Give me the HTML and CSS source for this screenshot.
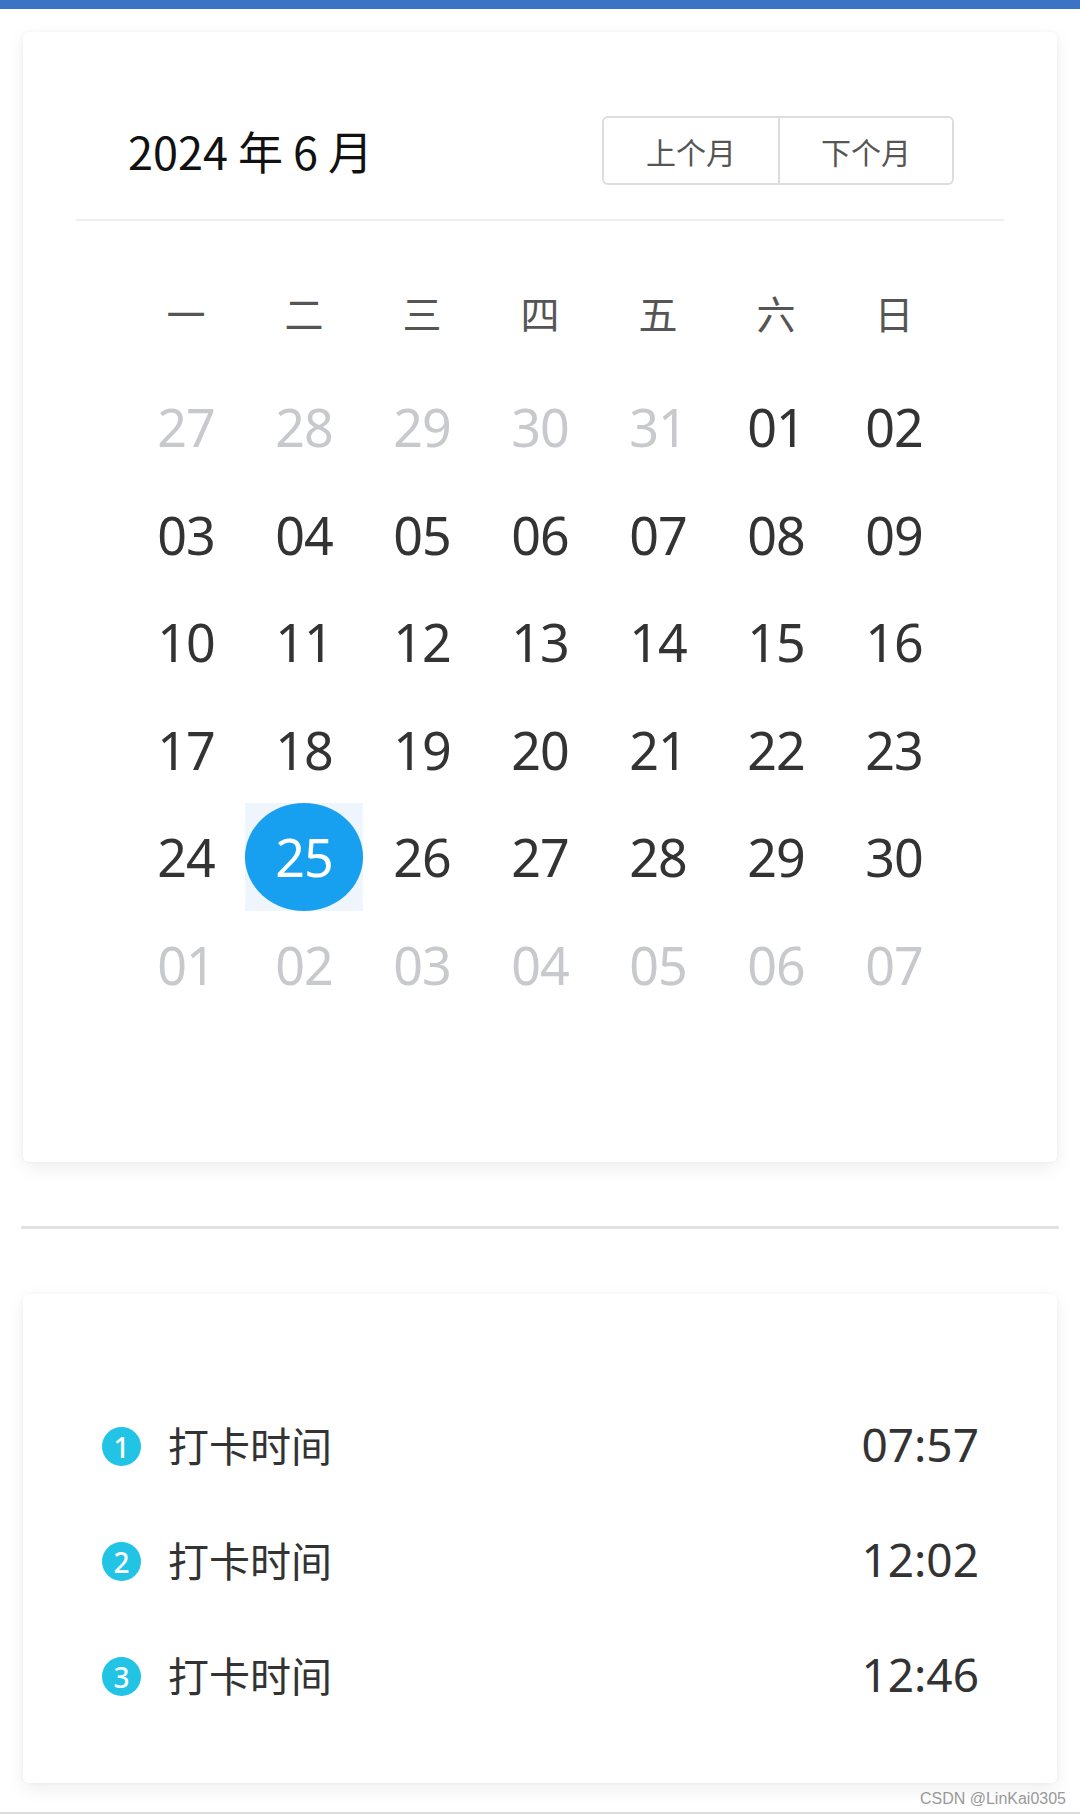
FILE: index.html
```html
<!DOCTYPE html>
<html>
<head>
  <meta charset="utf-8">
  <title>打卡日历</title>
  <link rel="stylesheet" href="styles.css">
</head>
<body>
  <div class="top-bar"></div>

  <div class="page">
    <div class="card calendar-card">
      <div class="calendar-header">
        <div class="month-title">2024 年 6 月</div>
        <div class="month-switch">
          <button class="switch-btn">上个月</button>
          <button class="switch-btn">下个月</button>
        </div>
      </div>

      <div class="calendar-grid">
        <div class="weekday">一</div>
        <div class="weekday">二</div>
        <div class="weekday">三</div>
        <div class="weekday">四</div>
        <div class="weekday">五</div>
        <div class="weekday">六</div>
        <div class="weekday">日</div>

        <div class="day other">27</div>
        <div class="day other">28</div>
        <div class="day other">29</div>
        <div class="day other">30</div>
        <div class="day other">31</div>
        <div class="day">01</div>
        <div class="day">02</div>

        <div class="day">03</div>
        <div class="day">04</div>
        <div class="day">05</div>
        <div class="day">06</div>
        <div class="day">07</div>
        <div class="day">08</div>
        <div class="day">09</div>

        <div class="day">10</div>
        <div class="day">11</div>
        <div class="day">12</div>
        <div class="day">13</div>
        <div class="day">14</div>
        <div class="day">15</div>
        <div class="day">16</div>

        <div class="day">17</div>
        <div class="day">18</div>
        <div class="day">19</div>
        <div class="day">20</div>
        <div class="day">21</div>
        <div class="day">22</div>
        <div class="day">23</div>

        <div class="day">24</div>
        <div class="day selected"><span class="day-dot">25</span></div>
        <div class="day">26</div>
        <div class="day">27</div>
        <div class="day">28</div>
        <div class="day">29</div>
        <div class="day">30</div>

        <div class="day other">01</div>
        <div class="day other">02</div>
        <div class="day other">03</div>
        <div class="day other">04</div>
        <div class="day other">05</div>
        <div class="day other">06</div>
        <div class="day other">07</div>
      </div>
    </div>

    <div class="separator"></div>

    <div class="card record-card">
      <div class="record">
        <span class="record-num">1</span>
        <span class="record-label">打卡时间</span>
        <span class="record-time">07:57</span>
      </div>
      <div class="record">
        <span class="record-num">2</span>
        <span class="record-label">打卡时间</span>
        <span class="record-time">12:02</span>
      </div>
      <div class="record">
        <span class="record-num">3</span>
        <span class="record-label">打卡时间</span>
        <span class="record-time">12:46</span>
      </div>
    </div>

    <div class="watermark">CSDN @LinKai0305</div>
  </div>
</body>
</html>
```

FILE: styles.css
```css
body {
  margin: 0;
  background-color: #fff;
  font-family: "Noto Sans", "Noto Sans CJK SC", sans-serif;
  color: #333;
}

.top-bar {
  height: 9px;
  background-color: #3b74c5;
}

.page {
  padding: 23px 21px 0;
  height: 1805px;
  box-sizing: border-box;
  border-bottom: 2px solid #ddd;
}

.card {
  margin: 0 2px;
  background-color: #fff;
  border-radius: 6px;
  box-shadow: 0 6px 18px rgba(0, 0, 0, 0.07), 0 0 4px rgba(0, 0, 0, 0.04);
}

/* calendar */

.calendar-card {
  height: 1130px;
  padding: 0 53px;
  box-sizing: border-box;
}

.calendar-header {
  display: flex;
  justify-content: space-between;
  align-items: center;
  padding: 84px 50px 34px 52px;
  border-bottom: 2px solid #eee;
}

.month-title {
  font-family: "Noto Sans CJK SC", sans-serif;
  font-size: 45px;
  color: #111;
}

.month-switch {
  display: flex;
  border: 2px solid #ddd;
  border-radius: 6px;
}

.switch-btn {
  width: 174px;
  height: 65px;
  background: #fff;
  border: none;
  border-radius: 6px;
  font-family: "Noto Sans CJK SC", sans-serif;
  font-size: 30px;
  color: #555;
  padding: 0;
}

.switch-btn + .switch-btn {
  border-left: 2px solid #ddd;
  border-radius: 0 6px 6px 0;
}

.calendar-grid {
  display: grid;
  grid-template-columns: repeat(7, 118px);
  grid-template-rows: 114px repeat(6, 107.5px);
  margin: 38px 0 0 51px;
}

.weekday {
  display: flex;
  align-items: center;
  justify-content: center;
  padding-bottom: 8px;
  font-family: "Noto Sans CJK SC", sans-serif;
  font-size: 39px;
  color: #555;
}

.day {
  display: flex;
  align-items: center;
  justify-content: center;
  font-size: 52px;
  letter-spacing: -1px;
  color: #333;
}

.day.other {
  color: #c8c9cc;
}

.day.selected {
  background-color: #eef5fc;
}

.day-dot {
  width: 100%;
  height: 100%;
  display: flex;
  align-items: center;
  justify-content: center;
  border-radius: 50%;
  background-color: #18a0f0;
  color: #fff;
}

.separator {
  height: 3px;
  background-color: #e2e2e2;
  margin: 64px 0 65px;
}

/* records */

.record-card {
  height: 489px;
  padding: 92px 78px 0 79px;
  box-sizing: border-box;
}

.record {
  display: flex;
  align-items: center;
  height: 115px;
}

.record-num {
  width: 39px;
  height: 39px;
  border-radius: 50%;
  background-color: #22c4e6;
  color: #fff;
  font-size: 28px;
  font-weight: 500;
  display: flex;
  align-items: center;
  justify-content: center;
  margin-top: 6px;
}

.record-label {
  margin-left: 27px;
  font-family: "Noto Sans CJK SC", sans-serif;
  font-size: 41px;
  color: #333;
}

.record-time {
  margin-left: auto;
  font-size: 46px;
  color: #333;
}

.watermark {
  text-align: right;
  font-family: "Liberation Sans", sans-serif;
  font-size: 16px;
  color: #999;
  margin: 7px -7px 0 0;
}
```
